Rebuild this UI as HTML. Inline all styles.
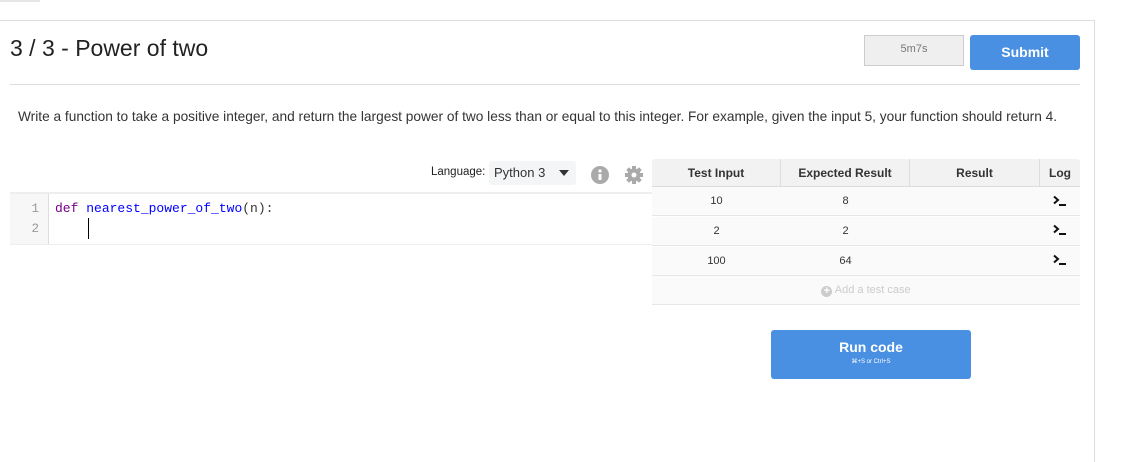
<!DOCTYPE html>
<html><head><style>
*{box-sizing:border-box;margin:0;padding:0}
body{width:1144px;height:462px;background:#fff;font-family:"Liberation Sans",sans-serif;position:relative;overflow:hidden;color:#333}
.a{position:absolute}
.th{position:absolute;top:0;height:28px;line-height:28px;text-align:center;font-weight:bold;font-size:12px;color:#333;border-right:1px solid #ddd}
.row{position:absolute;left:652px;width:428px;height:29px;border-bottom:1px solid #e6e6e6;background:#fafafa;font-size:11px;color:#333}
.row span{position:absolute;top:0;line-height:29px;text-align:center}
.lg{position:absolute;left:1053px;width:14px;height:12px}
</style></head><body>
<div class="a" style="left:0;top:0;width:40px;height:2px;background:#e6e6e6"></div>
<div class="a" style="left:0;top:20px;width:1095px;height:1px;background:#ddd"></div>
<div class="a" style="left:1094px;top:20px;width:1px;height:442px;background:#ddd"></div>
<div class="a" style="left:10px;top:35px;font-size:23px;color:#222">3 / 3 - Power of two</div>
<div class="a" style="left:864px;top:35px;width:100px;height:31px;background:#efefef;border:1px solid #ccc;text-align:center;font-size:11px;color:#777;line-height:26px">5m7s</div>
<div class="a" style="left:970px;top:35px;width:110px;height:35px;background:#4a90e2;border-radius:3px;color:#fff;font-weight:bold;font-size:14px;text-align:center;line-height:35px">Submit</div>
<div class="a" style="left:10px;top:84px;width:1070px;height:1px;background:#ddd"></div>
<div class="a" style="left:18px;top:109px;font-size:13.7px;color:#333;white-space:nowrap">Write a function to take a positive integer, and return the largest power of two less than or equal to this integer. For example, given the input 5, your function should return 4.</div>
<div class="a" style="left:431px;top:166px;font-size:11.5px;color:#222">Language:</div>
<div class="a" style="left:489px;top:161px;width:87px;height:24px;background:#f3f5f7;border-radius:3px;font-size:13px;color:#333;line-height:24px;padding-left:5px">Python 3<span style="position:absolute;left:70px;top:9px;width:0;height:0;border-left:5px solid transparent;border-right:5px solid transparent;border-top:6px solid #333"></span></div>
<svg class="a" style="left:591px;top:166px" width="18" height="18"><circle cx="9" cy="9" r="9" fill="#aaa"/><circle cx="9" cy="5" r="1.6" fill="#fff"/><rect x="7.5" y="8" width="3" height="6" fill="#fff"/></svg>
<svg class="a" style="left:625px;top:166px" width="18" height="18" viewBox="0 0 18 18"><g fill="#aaa" transform="translate(9 9)"><rect x="-2" y="-9" width="4" height="18"/><rect x="-2" y="-9" width="4" height="18" transform="rotate(45)"/><rect x="-2" y="-9" width="4" height="18" transform="rotate(90)"/><rect x="-2" y="-9" width="4" height="18" transform="rotate(135)"/><circle r="6.5"/></g><circle cx="9" cy="9" r="2.5" fill="#fff"/></svg>
<div class="a" style="left:10px;top:192px;width:642px;height:2px;background:#eee"></div>
<div class="a" style="left:10px;top:194px;width:39px;height:50px;background:#f7f7f7;border-right:1px solid #ddd"></div>
<div class="a" style="left:10px;top:244px;width:642px;height:1px;background:#eee"></div>
<div class="a" style="left:10px;top:199px;width:29px;text-align:right;font-family:'Liberation Mono',monospace;font-size:12.5px;color:#999;line-height:20px">1<br>2</div>
<div class="a" style="left:55px;top:199px;font-family:'Liberation Mono',monospace;font-size:13px;line-height:20px;color:#333"><span style="color:#708">def</span> <span style="color:#00f">nearest_power_of_two</span>(n):</div>
<div class="a" style="left:88px;top:218px;width:1px;height:21px;background:#000"></div>
<div class="a" style="left:652px;top:159px;width:428px;height:28px;background:#f2f2f2;border-radius:3px 3px 0 0;border-bottom:1px solid #ddd">
<div class="th" style="left:0;width:129px">Test Input</div>
<div class="th" style="left:129px;width:129px">Expected Result</div>
<div class="th" style="left:258px;width:130px">Result</div>
<div class="th" style="left:388px;width:40px;border:none">Log</div></div>
<div class="row" style="top:187px"><span style="left:0;width:129px">10</span><span style="left:129px;width:129px">8</span></div>
<div class="row" style="top:217px"><span style="left:0;width:129px">2</span><span style="left:129px;width:129px">2</span></div>
<div class="row" style="top:247px"><span style="left:0;width:129px">100</span><span style="left:129px;width:129px">64</span></div>
<svg class="lg" style="top:195px" viewBox="0 0 14 12"><path d="M1 1.5L5 5L1 8.5" stroke="#111" stroke-width="2" fill="none"/><rect x="6" y="9" width="7" height="2" fill="#111"/></svg>
<svg class="lg" style="top:224px" viewBox="0 0 14 12"><path d="M1 1.5L5 5L1 8.5" stroke="#111" stroke-width="2" fill="none"/><rect x="6" y="9" width="7" height="2" fill="#111"/></svg>
<svg class="lg" style="top:254px" viewBox="0 0 14 12"><path d="M1 1.5L5 5L1 8.5" stroke="#111" stroke-width="2" fill="none"/><rect x="6" y="9" width="7" height="2" fill="#111"/></svg>
<div class="row" style="top:276px;height:29px"><span style="left:0;width:428px;color:#ccc;font-size:11px"><span style="position:static;display:inline-block;width:11px;height:11px;border-radius:50%;background:#ccc;color:#fff;line-height:11px;font-weight:bold;vertical-align:-1px">+</span> Add a test case</span></div>
<div class="a" style="left:771px;top:330px;width:200px;height:49px;background:#4a90e2;border-radius:3px;color:#fff;text-align:center">
<div style="font-weight:bold;font-size:14px;margin-top:9px">Run code</div>
<div style="font-size:6px;margin-top:3px">⌘+S or Ctrl+S</div></div>
</body></html>
